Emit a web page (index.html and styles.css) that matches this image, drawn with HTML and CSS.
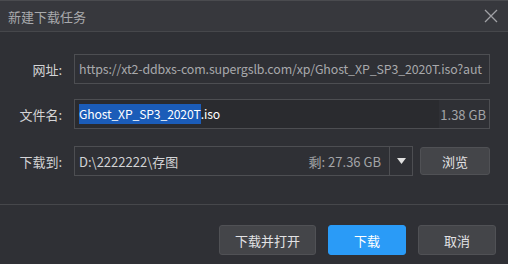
FILE: index.html
```html
<!DOCTYPE html>
<html>
<head>
<meta charset="utf-8">
<link rel="stylesheet" href="styles.css">
</head>
<body>
<div class="dialog">
  <div class="titlebar">
    <span class="title">新建下载任务</span>
    <svg class="close" width="14" height="14" viewBox="0 0 14 14"><path d="M1 1L13 13M13 1L1 13" stroke="#a0a1a5" stroke-width="1.3" fill="none"/></svg>
  </div>
  <div class="form">
    <div class="row row-url">
      <span class="label">网址:</span>
      <div class="field url">https://xt2-ddbxs-com.supergslb.com/xp/Ghost_XP_SP3_2020T.iso?aut</div>
    </div>
    <div class="row row-name">
      <span class="label">文件名:</span>
      <div class="field name">
        <div class="name-text"><span class="sel">Ghost_XP_SP3_2020T</span>.iso</div>
        <div class="size">1.38 GB</div>
      </div>
    </div>
    <div class="row row-save">
      <span class="label">下载到:</span>
      <div class="field save">
        <div class="path">D:\2222222\存图</div>
        <div class="free">剩: 27.36 GB</div>
        <div class="drop"><svg width="9" height="6" viewBox="0 0 9 6"><path d="M0 0H9L4.5 6Z" fill="#e0e0e0"/></svg></div>
      </div>
      <button class="btn browse">浏览</button>
    </div>
  </div>
  <div class="footer">
    <button class="btn wide">下载并打开</button>
    <button class="btn primary">下载</button>
    <button class="btn">取消</button>
  </div>
</div>
</body>
</html>
```
FILE: styles.css
```css
* { box-sizing: border-box; }
html, body { margin: 0; padding: 0; }
body {
  width: 508px;
  height: 264px;
  background: #2f3035;
  font-family: "Noto Sans CJK SC", "Noto Sans", sans-serif;
  font-size: 13px;
  overflow: hidden;
}
.dialog { width: 508px; height: 264px; display: flex; flex-direction: column; }
.titlebar {
  height: 32px;
  background: #37383d;
  border-top: 1px solid #4a4b4f;
  border-bottom: 1px solid #46474b;
  display: flex;
  align-items: center;
  justify-content: space-between;
  padding: 0 10px 0 8px;
}
.title { color: #a9aaad; font-size: 13px; }
.close { display: block; }
.form { display: flex; flex-direction: column; padding: 22px 18px 0 0; height: 173px; border-bottom: 1px solid #46474b; }
.row { display: flex; align-items: center; height: 30px; }
.row-name { margin-top: 15px; }
.row-save { margin-top: 17px; }
.label { width: 74px; padding-right: 12px; text-align: right; color: #d4d4d6; }
.field {
  flex: 1;
  height: 30px;
  border: 1px solid #4d4e52;
  display: flex;
  align-items: center;
}
.url { padding-left: 4px; color: #a8a9ac; white-space: nowrap; overflow: hidden; font-size: 12.4px; letter-spacing: -0.12px; }
.name-text { flex: 1; height: 100%; background: #2a2b2f; display: flex; align-items: center; padding-left: 4px; color: #ffffff; font-size: 12.2px; letter-spacing: -0.15px; }
.sel { background: #1b5cb8; color: #fff; padding: 1px 0; }
.size { width: 50px; padding-right: 3px; text-align: right; color: #a3a4a7; }
.save { flex: 0 0 339px; }
.path { flex: 1; padding-left: 4px; color: #d2d3d5; }
.free { padding-right: 8px; color: #a3a4a7; }
.drop { width: 23px; height: 100%; border-left: 1px solid #4d4e52; display: flex; align-items: center; justify-content: center; }
.drop svg { display: block; }
.btn {
  font-family: inherit;
  font-size: 13px;
  color: #e2e2e4;
  background: #444549;
  border: 1px solid #505155;
  border-radius: 3px;
  height: 30px;
  width: 78px;
  padding: 0;
}
.browse { width: 70px; height: 28px; margin-left: 7px; }
.footer { display: flex; justify-content: flex-end; padding: 20px 12px 0 0; gap: 12px; }
.wide { width: 97px; }
.primary { background: #2a9bf7; border-color: #2a9bf7; color: #fff; }
```
